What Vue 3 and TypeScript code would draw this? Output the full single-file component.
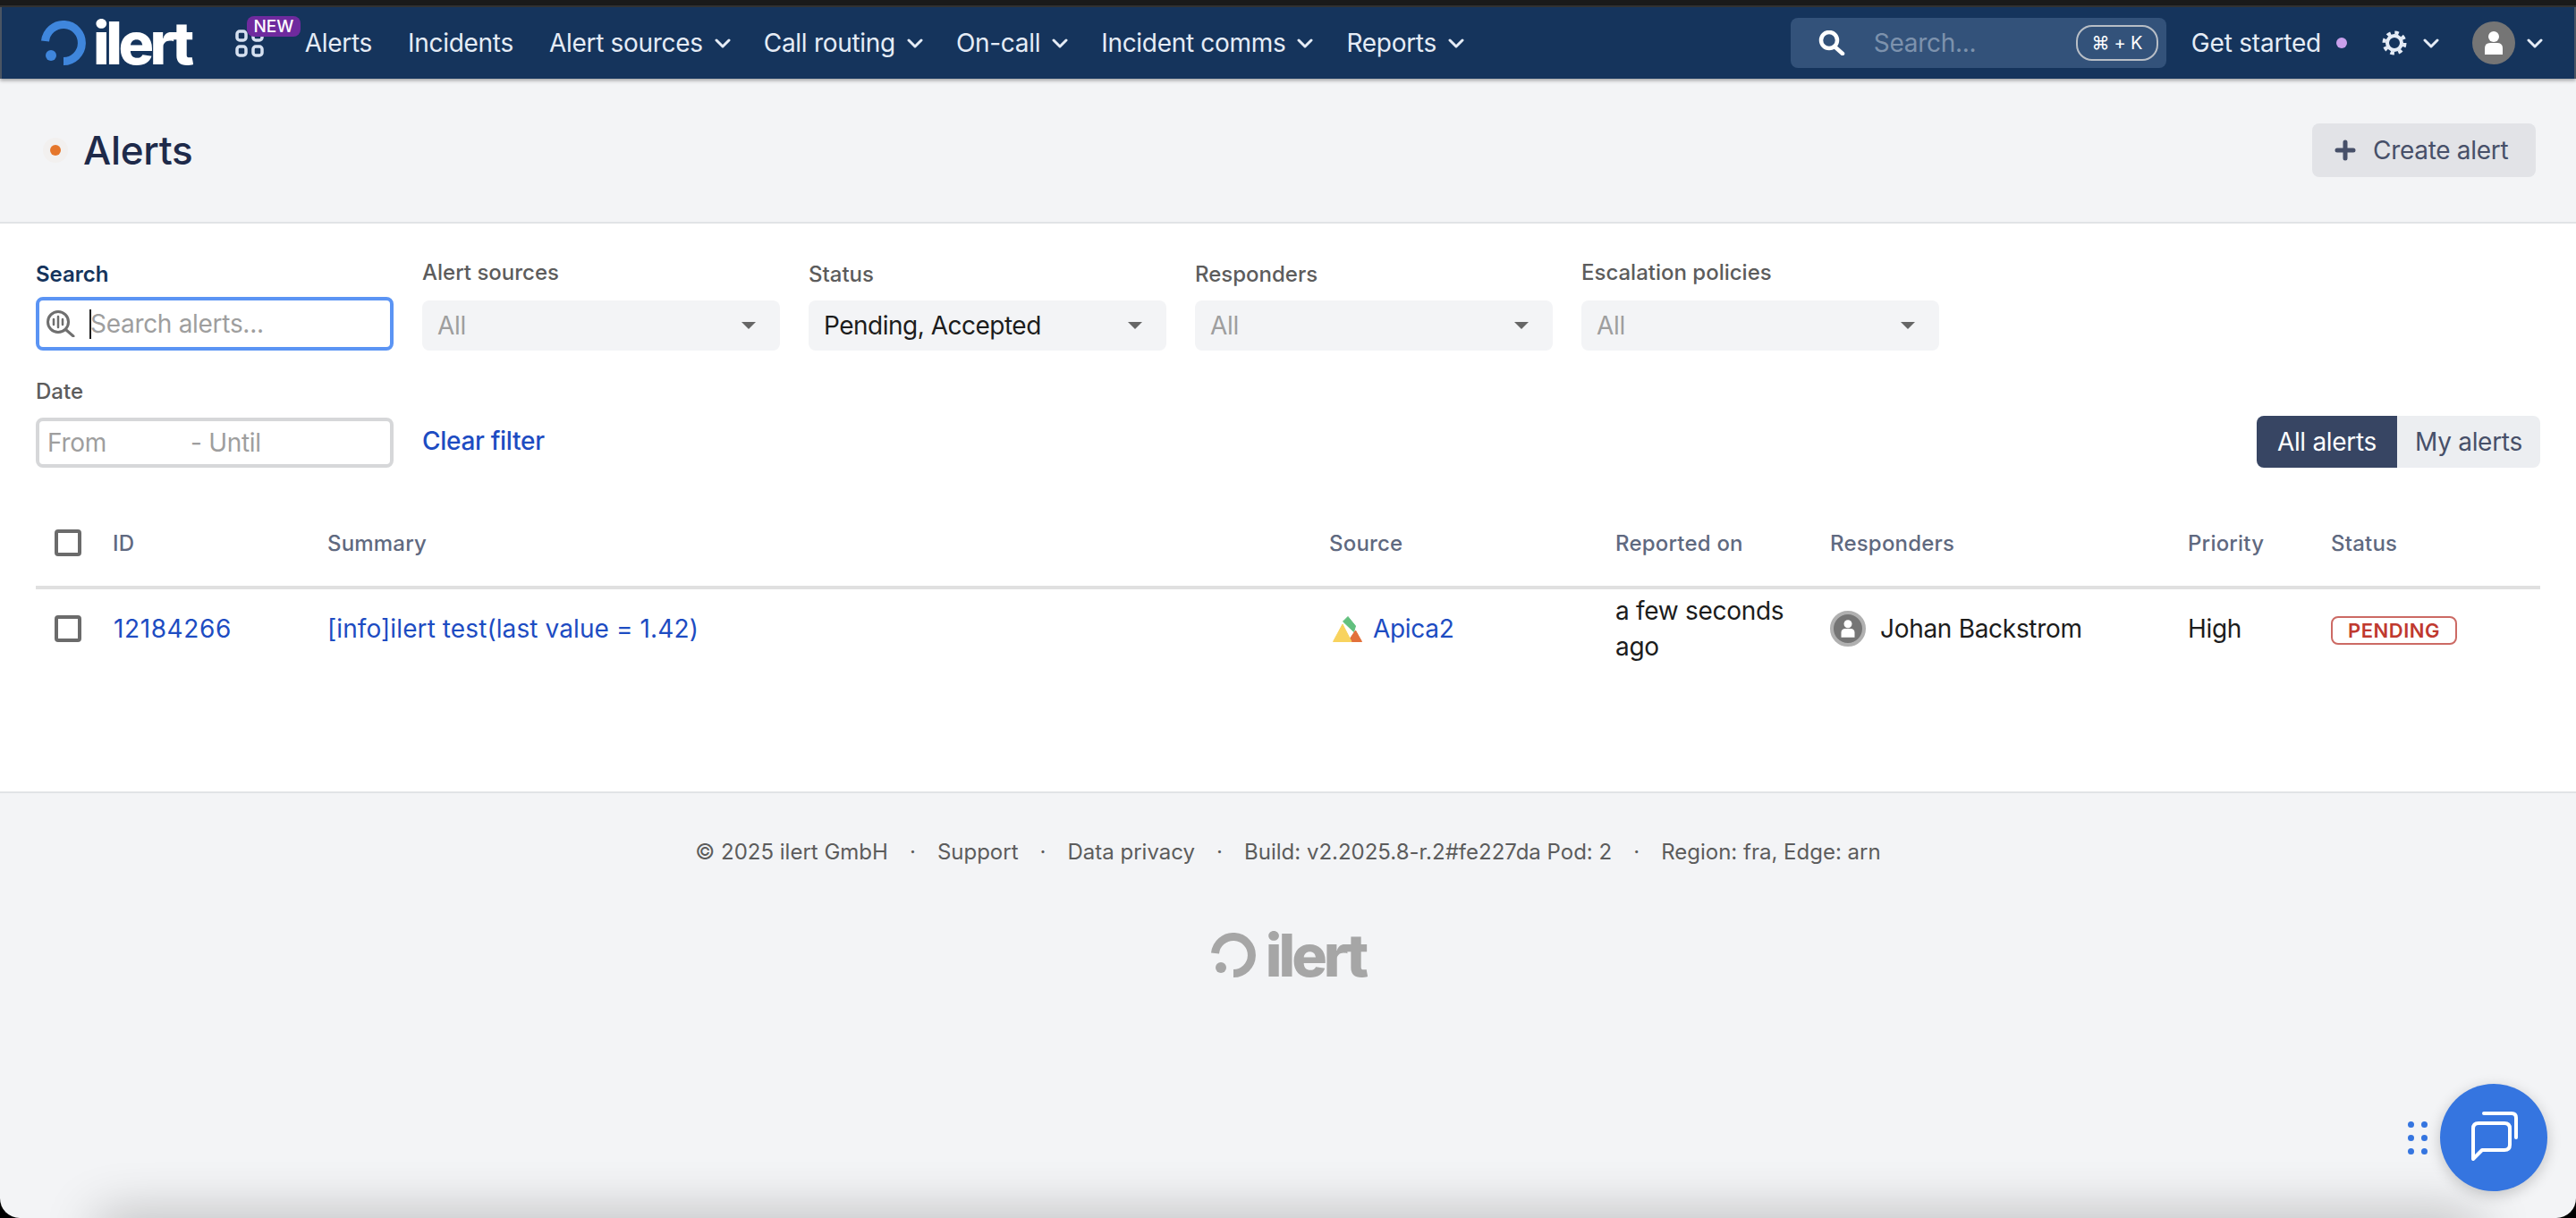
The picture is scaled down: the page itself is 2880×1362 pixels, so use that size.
<script setup lang="ts">
const navItems = [
  { label: 'Alerts', menu: false },
  { label: 'Incidents', menu: false },
  { label: 'Alert sources', menu: true },
  { label: 'Call routing', menu: true },
  { label: 'On-call', menu: true },
  { label: 'Incident comms', menu: true },
  { label: 'Reports', menu: true },
]

const selects = [
  { label: 'Alert sources', value: 'All', filled: false, raised: true },
  { label: 'Status', value: 'Pending, Accepted', filled: true, raised: false },
  { label: 'Responders', value: 'All', filled: false, raised: false },
  { label: 'Escalation policies', value: 'All', filled: false, raised: true },
]

const columns = ['ID', 'Summary', 'Source', 'Reported on', 'Responders', 'Priority', 'Status']

const footerItems = [
  '© 2025 ilert GmbH',
  'Support',
  'Data privacy',
  'Build: v2.2025.8-r.2#fe227da Pod: 2',
  'Region: fra, Edge: arn',
]
</script>

<template>
  <div class="page">
    <div class="window-bar"></div>

    <nav class="nav">
      <div class="logo">
        <svg class="logo-ring" width="50" height="50" viewBox="0 0 50 50">
          <path d="M4.5 23 A20.5 20.5 0 1 1 25 45.5" fill="none" stroke="currentColor" stroke-width="9" />
          <circle cx="11" cy="39" r="6" fill="currentColor" />
        </svg>
        <span class="logo-text">ilert</span>
      </div>

      <div class="apps">
        <svg width="32" height="31" viewBox="0 0 32 31" fill="none" stroke="#d5e0f0" stroke-width="3.5">
          <rect x="2" y="2" width="10" height="10" rx="3" />
          <rect x="20" y="2" width="10" height="10" rx="3" />
          <rect x="2" y="19" width="10" height="10" rx="3" />
          <rect x="20" y="19" width="10" height="10" rx="3" />
        </svg>
        <span class="new-badge">NEW</span>
      </div>

      <ul class="nav-list">
        <li v-for="item in navItems" :key="item.label" class="nav-item" :class="{ 'nav-item--plain': !item.menu }">
          {{ item.label }}
          <svg v-if="item.menu" class="chevron" width="18" height="11" viewBox="0 0 18 11" fill="none">
            <path d="M2 2 L9 9 L16 2" stroke="currentColor" stroke-width="3" stroke-linecap="round" stroke-linejoin="round" />
          </svg>
        </li>
      </ul>

      <div class="nav-right">
        <div class="global-search">
          <svg width="30" height="28" viewBox="0 0 30 28" fill="none" stroke="#fff" stroke-width="4.5">
            <circle cx="12" cy="11" r="9" />
            <path d="M18 18 L27 26" stroke-linecap="round" />
          </svg>
          <span class="global-placeholder">Search...</span>
          <span class="kbd">⌘ + K</span>
        </div>
        <span class="get-started">Get started</span>
        <span class="started-dot"></span>
        <div class="gear">
          <svg width="28" height="28" viewBox="0 0 28 28" fill="none" stroke="#e5ecf6">
            <circle cx="14" cy="14" r="8" stroke-width="4" />
            <circle cx="14" cy="14" r="11.5" stroke-width="4" stroke-dasharray="4.5 4.53" />
          </svg>
          <svg class="chevron" width="18" height="11" viewBox="0 0 18 11" fill="none">
            <path d="M2 2 L9 9 L16 2" stroke="currentColor" stroke-width="3" stroke-linecap="round" stroke-linejoin="round" />
          </svg>
        </div>
        <div class="account">
          <span class="avatar">
            <svg width="24" height="28" viewBox="0 0 24 28" fill="#fff">
              <circle cx="12" cy="7" r="6" />
              <path d="M2 27 V20 Q2 14 8 14 H16 Q22 14 22 20 V27 Z" />
            </svg>
          </span>
          <svg class="chevron" width="18" height="11" viewBox="0 0 18 11" fill="none">
            <path d="M2 2 L9 9 L16 2" stroke="currentColor" stroke-width="3" stroke-linecap="round" stroke-linejoin="round" />
          </svg>
        </div>
      </div>
    </nav>

    <header class="page-header">
      <span class="status-dot"><span></span></span>
      <h1 class="title">Alerts</h1>
      <button class="create-btn">
        <svg width="24" height="24" viewBox="0 0 24 24" stroke="currentColor" stroke-width="5" stroke-linecap="round">
          <path d="M12 3 V21 M3 12 H21" />
        </svg>
        Create alert
      </button>
    </header>

    <main class="content">
      <div class="filter-row">
        <div class="field">
          <label class="field-label field-label--active">Search</label>
          <div class="search-input">
            <svg width="32" height="30" viewBox="0 0 32 30" fill="none" stroke="#6f6f6f">
              <circle cx="13" cy="13" r="11.5" stroke-width="3" />
              <path d="M22 22 L30 29" stroke-width="3" stroke-linecap="round" />
              <path d="M8 10 V16 M13 7 V19 M18 10 V16" stroke-width="2.5" stroke-linecap="round" />
            </svg>
            <span class="text-caret"></span>
            <span class="placeholder search-placeholder">Search alerts...</span>
          </div>
        </div>
        <div v-for="field in selects" :key="field.label" class="field">
          <label class="field-label" :class="{ 'field-label--raised': field.raised }">{{ field.label }}</label>
          <div class="select">
            <span :class="field.filled ? 'select-value' : 'placeholder'">{{ field.value }}</span>
            <span class="caret"></span>
          </div>
        </div>
      </div>

      <div class="filter-row filter-row--date">
        <div class="field">
          <label class="field-label">Date</label>
          <div class="date-input placeholder">
            <span class="date-from">From</span>
            <span>- Until</span>
          </div>
        </div>
        <a class="clear-filter">Clear filter</a>
        <div class="toggle">
          <span class="toggle-item toggle-item--on">All alerts</span>
          <span class="toggle-item">My alerts</span>
        </div>
      </div>

      <table class="alerts">
        <colgroup>
          <col class="col-check" />
          <col class="col-id" />
          <col class="col-summary" />
          <col class="col-source" />
          <col class="col-reported" />
          <col class="col-responders" />
          <col class="col-priority" />
          <col />
        </colgroup>
        <thead>
          <tr>
            <th><span class="checkbox"></span></th>
            <th v-for="col in columns" :key="col">{{ col }}</th>
          </tr>
        </thead>
        <tbody>
          <tr>
            <td><span class="checkbox"></span></td>
            <td><a class="link alert-id">12184266</a></td>
            <td><a class="link alert-summary">[info]ilert test(last value = 1.42)</a></td>
            <td>
              <div class="source">
                <svg width="33" height="29" viewBox="0 0 33 29" stroke-width="1" stroke-linejoin="round">
                  <polygon points="25.5,16 32.5,28.5 17,28.5" fill="#e2703a" stroke="#e2703a" />
                  <polygon points="11,9 21,28.5 0.5,28.5" fill="#f8d35e" stroke="#f8d35e" />
                  <polygon points="17,0.5 25.5,11 23.5,17.5 11.5,6" fill="#62c07e" stroke="#62c07e" />
                </svg>
                <a class="link">Apica2</a>
              </div>
            </td>
            <td class="reported">a few seconds ago</td>
            <td>
              <div class="responder">
                <span class="responder-avatar">
                  <svg width="18" height="22" viewBox="0 0 24 28" fill="#fff">
                    <circle cx="12" cy="7" r="6" />
                    <path d="M2 27 V20 Q2 14 8 14 H16 Q22 14 22 20 V27 Z" />
                  </svg>
                </span>
                Johan Backstrom
              </div>
            </td>
            <td>High</td>
            <td><span class="pending">PENDING</span></td>
          </tr>
        </tbody>
      </table>
    </main>

    <footer class="footer">
      <div class="footer-line">
        <template v-for="(item, i) in footerItems" :key="item">
          <span v-if="i > 0" class="footer-sep">·</span>
          <span>{{ item }}</span>
        </template>
      </div>
      <div class="logo logo--muted">
        <svg class="logo-ring" width="50" height="50" viewBox="0 0 50 50">
          <path d="M4.5 23 A20.5 20.5 0 1 1 25 45.5" fill="none" stroke="currentColor" stroke-width="9" />
          <circle cx="11" cy="39" r="6" fill="currentColor" />
        </svg>
        <span class="logo-text">ilert</span>
      </div>
    </footer>

    <div class="bottom-shade"></div>

    <div class="chat-widget">
      <svg width="22" height="37" viewBox="0 0 22 37" fill="#3575e0">
        <circle cx="3.5" cy="3.5" r="3.5" />
        <circle cx="18.5" cy="3.5" r="3.5" />
        <circle cx="3.5" cy="18.5" r="3.5" />
        <circle cx="18.5" cy="18.5" r="3.5" />
        <circle cx="3.5" cy="33.5" r="3.5" />
        <circle cx="18.5" cy="33.5" r="3.5" />
      </svg>
      <button class="chat-btn">
        <svg width="120" height="120" viewBox="0 0 120 120" fill="none" stroke="#fff" stroke-width="4" stroke-linecap="round" stroke-linejoin="round">
          <path d="M37 84 V50 Q37 44 43 44 H72 Q78 44 78 50 V68 Q78 74 72 74 H47 Z" />
          <path d="M49 33 H80 Q85 33 85 38 V60" />
        </svg>
      </button>
    </div>
  </div>
</template>

<style scoped>
.page {
  position: relative;
  display: flex;
  flex-direction: column;
  width: 2880px;
  height: 1362px;
  overflow: hidden;
  border-radius: 0 0 22px 22px;
  background: #f3f4f6;
  font-family: Inter, 'Liberation Sans', sans-serif;
  font-size: 28px;
  letter-spacing: -0.3px;
  color: #1c1c1c;
}

.window-bar {
  height: 6px;
  border-bottom: 2px solid #333;
  background: #1a1a1a;
  flex: none;
}

.nav {
  position: relative;
  z-index: 2;
  display: flex;
  align-items: center;
  flex: none;
  height: 80px;
  padding-left: 44px;
  padding-right: 35px;
  border-left: 2px solid #4b5563;
  border-right: 2px solid #4b5563;
  background: #15345c;
  box-shadow: 0 2px 4px rgba(0, 0, 0, 0.35);
  color: #e5ecf6;
}

.logo {
  display: flex;
  align-items: center;
  gap: 8px;
  color: #fff;
}

.logo-ring {
  color: #3f86dc;
}

.logo-text {
  font-size: 66px;
  line-height: 50px;
  font-weight: 800;
  letter-spacing: -4.5px;
}

.logo--muted {
  gap: 11px;
  margin-top: 74px;
  color: #a6a6a6;
}

.logo--muted .logo-ring {
  color: #a6a6a6;
}

.logo--muted .logo-text {
  letter-spacing: -4px;
}

.apps {
  position: relative;
  display: flex;
  margin-left: 50px;
}

.new-badge {
  position: absolute;
  left: 13px;
  top: -15px;
  width: 60px;
  height: 23px;
  border-radius: 8px;
  background: #6f2a9e;
  color: #fff;
  font-size: 19px;
  font-weight: 500;
  line-height: 23px;
  letter-spacing: 0;
  text-align: center;
}

.nav-list {
  display: flex;
  align-items: center;
  gap: 37px;
  margin: 0 0 0 46px;
  padding: 0;
  list-style: none;
}

.nav-item {
  display: flex;
  align-items: center;
  gap: 13px;
}

.nav-item--plain {
  margin-right: 3px;
}

.chevron {
  color: #e5ecf6;
}

.nav-right {
  display: flex;
  align-items: center;
  margin-left: auto;
}

.global-search {
  display: flex;
  align-items: center;
  box-sizing: border-box;
  width: 420px;
  height: 56px;
  padding: 0 9px 0 31px;
  border-radius: 8px;
  background: #33527a;
}

.global-placeholder {
  margin-left: 32px;
  color: #7d92ad;
}

.kbd {
  box-sizing: border-box;
  width: 92px;
  height: 40px;
  margin-left: auto;
  border: 2px solid #b8bec6;
  border-radius: 18px;
  color: #fff;
  font-size: 20px;
  line-height: 36px;
  text-align: center;
}

.get-started {
  margin-left: 28px;
  letter-spacing: -0.2px;
}

.started-dot {
  width: 12px;
  height: 12px;
  margin-left: 17px;
  border-radius: 50%;
  background: #c9a0ec;
}

.gear {
  display: flex;
  align-items: center;
  gap: 18px;
  margin-left: 39px;
}

.account {
  display: flex;
  align-items: center;
  gap: 13px;
  margin-left: 37px;
}

.avatar {
  display: flex;
  align-items: center;
  justify-content: center;
  width: 48px;
  height: 48px;
  border-radius: 50%;
  background: #757575;
}

.page-header {
  display: flex;
  align-items: center;
  flex: none;
  box-sizing: border-box;
  height: 162px;
  padding: 0 45px 0 48px;
  border-bottom: 2px solid #e1e3e6;
}

.status-dot {
  display: flex;
  align-items: center;
  justify-content: center;
  width: 28px;
  height: 28px;
  border-radius: 50%;
  background: #f2f0ef;
}

.status-dot span {
  width: 12px;
  height: 12px;
  border-radius: 50%;
  background: #e5762b;
}

.title {
  margin: 0 0 0 17px;
  color: #1e2a4a;
  font-size: 44px;
  font-weight: 500;
}

.create-btn {
  display: flex;
  align-items: center;
  gap: 19px;
  box-sizing: border-box;
  width: 250px;
  height: 60px;
  margin-left: auto;
  padding: 0 0 0 25px;
  border: none;
  border-radius: 8px;
  background: #e2e3e7;
  color: #475069;
  font: inherit;
  letter-spacing: inherit;
}

.content {
  flex: none;
  box-sizing: border-box;
  padding: 41px 40px 138px;
  background: #fff;
}

.filter-row {
  display: flex;
  align-items: flex-end;
  gap: 32px;
}

.filter-row--date {
  margin-top: 30px;
}

.field {
  display: flex;
  flex-direction: column;
  width: 400px;
}

.field-label {
  margin-bottom: 13px;
  color: #5c5c5c;
  font-size: 24px;
  font-weight: 500;
  line-height: 32px;
  letter-spacing: 0;
}

.field-label--active {
  margin-bottom: 9px;
  color: #15345c;
  font-weight: 600;
}

.field-label--raised {
  position: relative;
  top: -2px;
}

.search-input {
  display: flex;
  align-items: center;
  box-sizing: border-box;
  height: 60px;
  padding-left: 8px;
  border: 4px solid #5b94f4;
  border-radius: 8px;
}

.text-caret {
  width: 2px;
  height: 33px;
  margin-left: 16px;
  background: #1c1c1c;
}

.search-placeholder {
  margin-left: -1px;
}

.placeholder {
  color: #9e9e9e;
}

.select {
  display: flex;
  align-items: center;
  justify-content: space-between;
  box-sizing: border-box;
  height: 56px;
  padding: 0 27px 0 17px;
  border-radius: 8px;
  background: #f3f4f6;
}

.select-value {
  color: #1c1c1c;
  letter-spacing: -0.5px;
}

.caret {
  width: 0;
  height: 0;
  border-left: 8px solid transparent;
  border-right: 8px solid transparent;
  border-top: 8px solid #666;
}

.date-input {
  display: flex;
  align-items: center;
  box-sizing: border-box;
  height: 56px;
  padding-left: 9px;
  border: 4px solid #d6d7d9;
  border-radius: 8px;
}

.date-from {
  width: 160px;
}

.clear-filter {
  align-self: flex-end;
  margin-bottom: 13px;
  color: #1d4cc2;
  font-weight: 500;
}

.toggle {
  display: flex;
  margin-left: auto;
  border-radius: 8px;
  overflow: hidden;
}

.toggle-item {
  display: flex;
  align-items: center;
  justify-content: center;
  height: 58px;
  width: 160px;
  background: #eceef1;
  color: #475069;
}

.toggle-item--on {
  width: 157px;
  background: #374563;
  color: #fff;
}

.alerts {
  width: 100%;
  margin-top: 46px;
  border-collapse: separate;
  border-spacing: 0;
  table-layout: fixed;
}

.col-check {
  width: 86px;
}

.col-id {
  width: 240px;
}

.col-summary {
  width: 1120px;
}

.col-source {
  width: 320px;
}

.col-reported {
  width: 240px;
}

.col-responders {
  width: 400px;
}

.col-priority {
  width: 160px;
}

th {
  height: 90px;
  padding: 0 0 10px;
  border-bottom: 4px solid #e0e0e0;
  color: #5f6980;
  font-size: 24px;
  font-weight: 500;
  letter-spacing: 0.2px;
  text-align: left;
  box-sizing: border-box;
}

td {
  height: 88px;
  padding: 0;
  vertical-align: middle;
  box-sizing: border-box;
}

th:first-child,
td:first-child {
  padding-left: 21px;
}

.checkbox {
  display: block;
  box-sizing: border-box;
  width: 30px;
  height: 30px;
  border: 4px solid #6b6b6b;
  border-radius: 4px;
}

.link {
  color: #1d4cc2;
}

.alert-id {
  margin-left: 1px;
  letter-spacing: 0.6px;
}

.alert-summary {
  letter-spacing: 0.1px;
}

.source {
  display: flex;
  align-items: center;
  gap: 12px;
  padding-left: 4px;
}

.reported {
  padding-right: 40px;
  line-height: 40px;
}

.responder {
  display: flex;
  align-items: center;
  gap: 16px;
}

.responder-avatar {
  display: flex;
  align-items: center;
  justify-content: center;
  box-sizing: border-box;
  width: 40px;
  height: 40px;
  border: 4px solid #b0b0b0;
  border-radius: 50%;
  background: #757575;
}

.pending {
  display: inline-block;
  box-sizing: border-box;
  width: 141px;
  height: 32px;
  border: 2px solid #cc6a64;
  border-radius: 8px;
  color: #c0392f;
  font-size: 22px;
  font-weight: 600;
  line-height: 28px;
  text-align: center;
  letter-spacing: 0.5px;
  vertical-align: middle;
}

.footer {
  display: flex;
  flex-direction: column;
  align-items: center;
  flex: 1;
  padding-top: 50px;
  border-top: 2px solid #e1e3e6;
  color: #5c5c5c;
  font-size: 24px;
  letter-spacing: 0;
}

.footer-line {
  display: flex;
  line-height: 32px;
}

.footer-sep {
  width: 55px;
  text-align: center;
}

.bottom-shade {
  position: absolute;
  left: 110px;
  right: 110px;
  bottom: -40px;
  height: 40px;
  box-shadow: 0 0 60px rgba(0, 0, 0, 0.3);
  pointer-events: none;
}

.chat-widget {
  position: absolute;
  right: 32px;
  bottom: 30px;
  display: flex;
  align-items: center;
  gap: 14px;
}

.chat-btn {
  display: block;
  width: 120px;
  height: 120px;
  padding: 0;
  border: none;
  border-radius: 50%;
  background: #3575e0;
  box-shadow: 0 4px 16px rgba(0, 0, 0, 0.2);
}

.chat-btn svg {
  display: block;
}
</style>

<style>
html,
body {
  margin: 0;
  background: #000;
}
</style>
